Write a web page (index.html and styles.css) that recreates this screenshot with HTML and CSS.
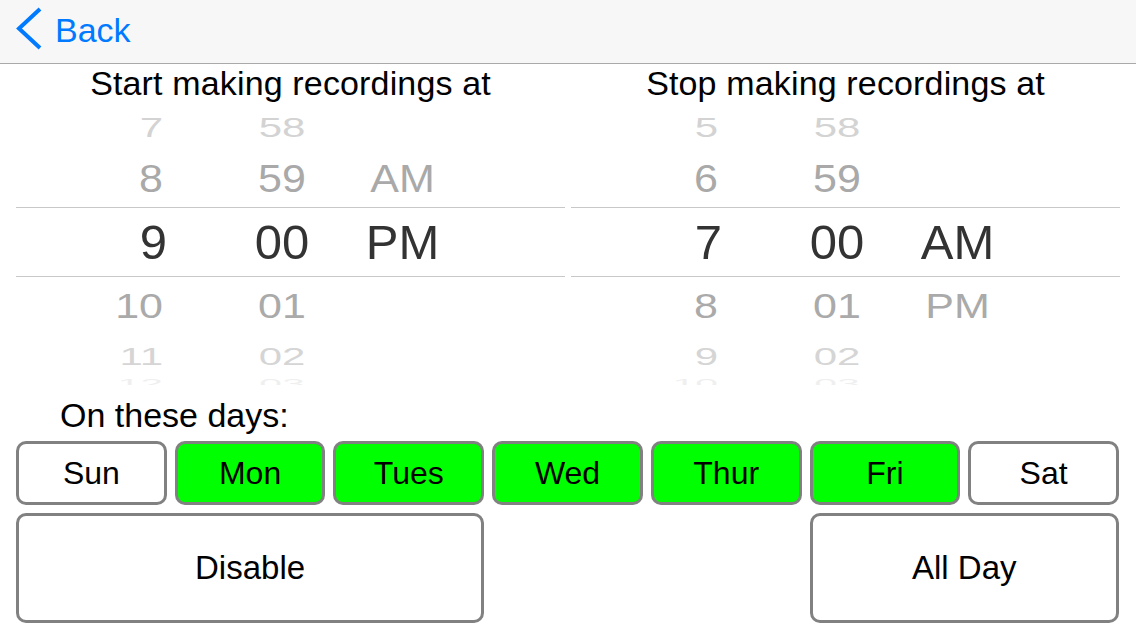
FILE: index.html
```html
<!DOCTYPE html>
<html>
<head>
<meta charset="utf-8">
<link rel="stylesheet" href="styles.css">
</head>
<body>
<div class="nav">
  <svg class="chev" width="30" height="44" viewBox="0 0 30 44"><path d="M26 2 L5 21.5 L26 41" fill="none" stroke="#007aff" stroke-width="4"/></svg>
  <span class="back">Back</span>
</div>
<div class="pickers">
  <div class="picker">
    <div class="title">Start making recordings at</div>
    <div class="wheel">
      <div class="row r1"><div class="c h"><span>7</span></div><div class="c m"><span>58</span></div><div class="c ap"></div></div>
      <div class="row r2"><div class="c h"><span>8</span></div><div class="c m"><span>59</span></div><div class="c ap"><span>AM</span></div></div>
      <div class="row sel"><div class="c h"><span>9</span></div><div class="c m"><span>00</span></div><div class="c ap"><span>PM</span></div></div>
      <div class="row r4"><div class="c h"><span>10</span></div><div class="c m"><span>01</span></div><div class="c ap"></div></div>
      <div class="row r5"><div class="c h"><span>11</span></div><div class="c m"><span>02</span></div><div class="c ap"></div></div>
      <div class="row r6"><div class="c h"><span>12</span></div><div class="c m"><span>03</span></div><div class="c ap"></div></div>
    </div>
  </div>
  <div class="picker">
    <div class="title">Stop making recordings at</div>
    <div class="wheel">
      <div class="row r1"><div class="c h"><span>5</span></div><div class="c m"><span>58</span></div><div class="c ap"></div></div>
      <div class="row r2"><div class="c h"><span>6</span></div><div class="c m"><span>59</span></div><div class="c ap"></div></div>
      <div class="row sel"><div class="c h"><span>7</span></div><div class="c m"><span>00</span></div><div class="c ap"><span>AM</span></div></div>
      <div class="row r4"><div class="c h"><span>8</span></div><div class="c m"><span>01</span></div><div class="c ap"><span>PM</span></div></div>
      <div class="row r5"><div class="c h"><span>9</span></div><div class="c m"><span>02</span></div><div class="c ap"></div></div>
      <div class="row r6"><div class="c h"><span>10</span></div><div class="c m"><span>03</span></div><div class="c ap"></div></div>
    </div>
  </div>
</div>
<div class="days-label">On these days:</div>
<div class="days">
  <div class="btn day">Sun</div>
  <div class="btn day on">Mon</div>
  <div class="btn day on">Tues</div>
  <div class="btn day on">Wed</div>
  <div class="btn day on">Thur</div>
  <div class="btn day on">Fri</div>
  <div class="btn day">Sat</div>
  <div class="btn big disable">Disable</div>
  <div class="btn big allday">All Day</div>
</div>
</body>
</html>
```
FILE: styles.css
```css
html, body {
  margin: 0;
  padding: 0;
  background: #ffffff;
}
body {
  width: 1136px;
  height: 640px;
  overflow: hidden;
  font-family: "Liberation Sans", Arial, sans-serif;
  color: #000;
}
.nav {
  height: 63px;
  background: #f7f7f7;
  border-bottom: 1px solid #a9a9a9;
  display: flex;
  align-items: flex-start;
  padding-left: 14px;
}
.chev {
  display: block;
  margin-top: 7px;
}
.back {
  margin-top: 13px;
  margin-left: 11px;
  font-size: 34px;
  line-height: 34px;
  color: #007aff;
}
.pickers {
  display: flex;
  gap: 6px;
  padding: 0 16px;
}
.picker {
  flex: 1;
  display: flex;
  flex-direction: column;
}
.title {
  text-align: center;
  font-size: 34px;
  letter-spacing: 0.15px;
  line-height: 31px;
  padding-top: 4px;
  height: 37px;
  white-space: nowrap;
}
.wheel {
  display: flex;
  flex-direction: column;
}
.row {
  display: grid;
  grid-template-columns: 190px 152px 89px;
  align-items: center;
  overflow: hidden;
  box-sizing: border-box;
}
.c {
  white-space: nowrap;
}
.c span {
  display: inline-block;
}
.c.h {
  text-align: right;
  padding-right: 43px;
}
.c.m, .c.ap {
  text-align: center;
}
.r1 {
  height: 45px;
  font-size: 42px;
  line-height: 45px;
  color: #d3d3d3;
}
.r1 span {
  transform: scaleY(0.65);
}
.r2 {
  height: 57px;
  font-size: 43px;
  line-height: 57px;
  color: #a9a9a9;
}
.r2 span {
  transform: scaleY(0.9);
}
.sel {
  height: 70px;
  border-top: 1px solid #c8c8c8;
  border-bottom: 1px solid #c8c8c8;
  font-size: 49px;
  line-height: 68px;
  color: #333333;
}
.sel .c.h {
  padding-right: 39px;
}
.r4 {
  height: 59px;
  font-size: 43px;
  line-height: 59px;
  color: #aaaaaa;
}
.r4 span {
  transform: scaleY(0.8);
}
.r5 {
  height: 42px;
  font-size: 42px;
  line-height: 42px;
  color: #d5d5d5;
}
.r5 span {
  transform: scaleY(0.55);
}
.r6 {
  height: 7px;
  align-items: start;
  font-size: 41px;
  line-height: 41px;
  color: #efefef;
}
.r6 span {
  transform: scaleY(0.3);
  transform-origin: 50% 0;
}
.days-label {
  height: 52px;
  padding-top: 4px;
  padding-left: 60px;
  font-size: 34px;
  line-height: 52px;
}
.days {
  display: grid;
  grid-template-columns: repeat(7, 1fr);
  column-gap: 8px;
  row-gap: 8px;
  padding: 0 17px 0 16px;
}
.btn {
  box-sizing: border-box;
  border: 3px solid #818181;
  border-radius: 10px;
  background: #ffffff;
  display: flex;
  align-items: center;
  justify-content: center;
  color: #000;
}
.day {
  height: 64px;
  font-size: 32px;
}
.day.on {
  background: #00ff00;
}
.big {
  height: 110px;
  font-size: 33px;
}
.disable {
  grid-column: 1 / 4;
}
.allday {
  grid-column: 6 / 8;
}
```
